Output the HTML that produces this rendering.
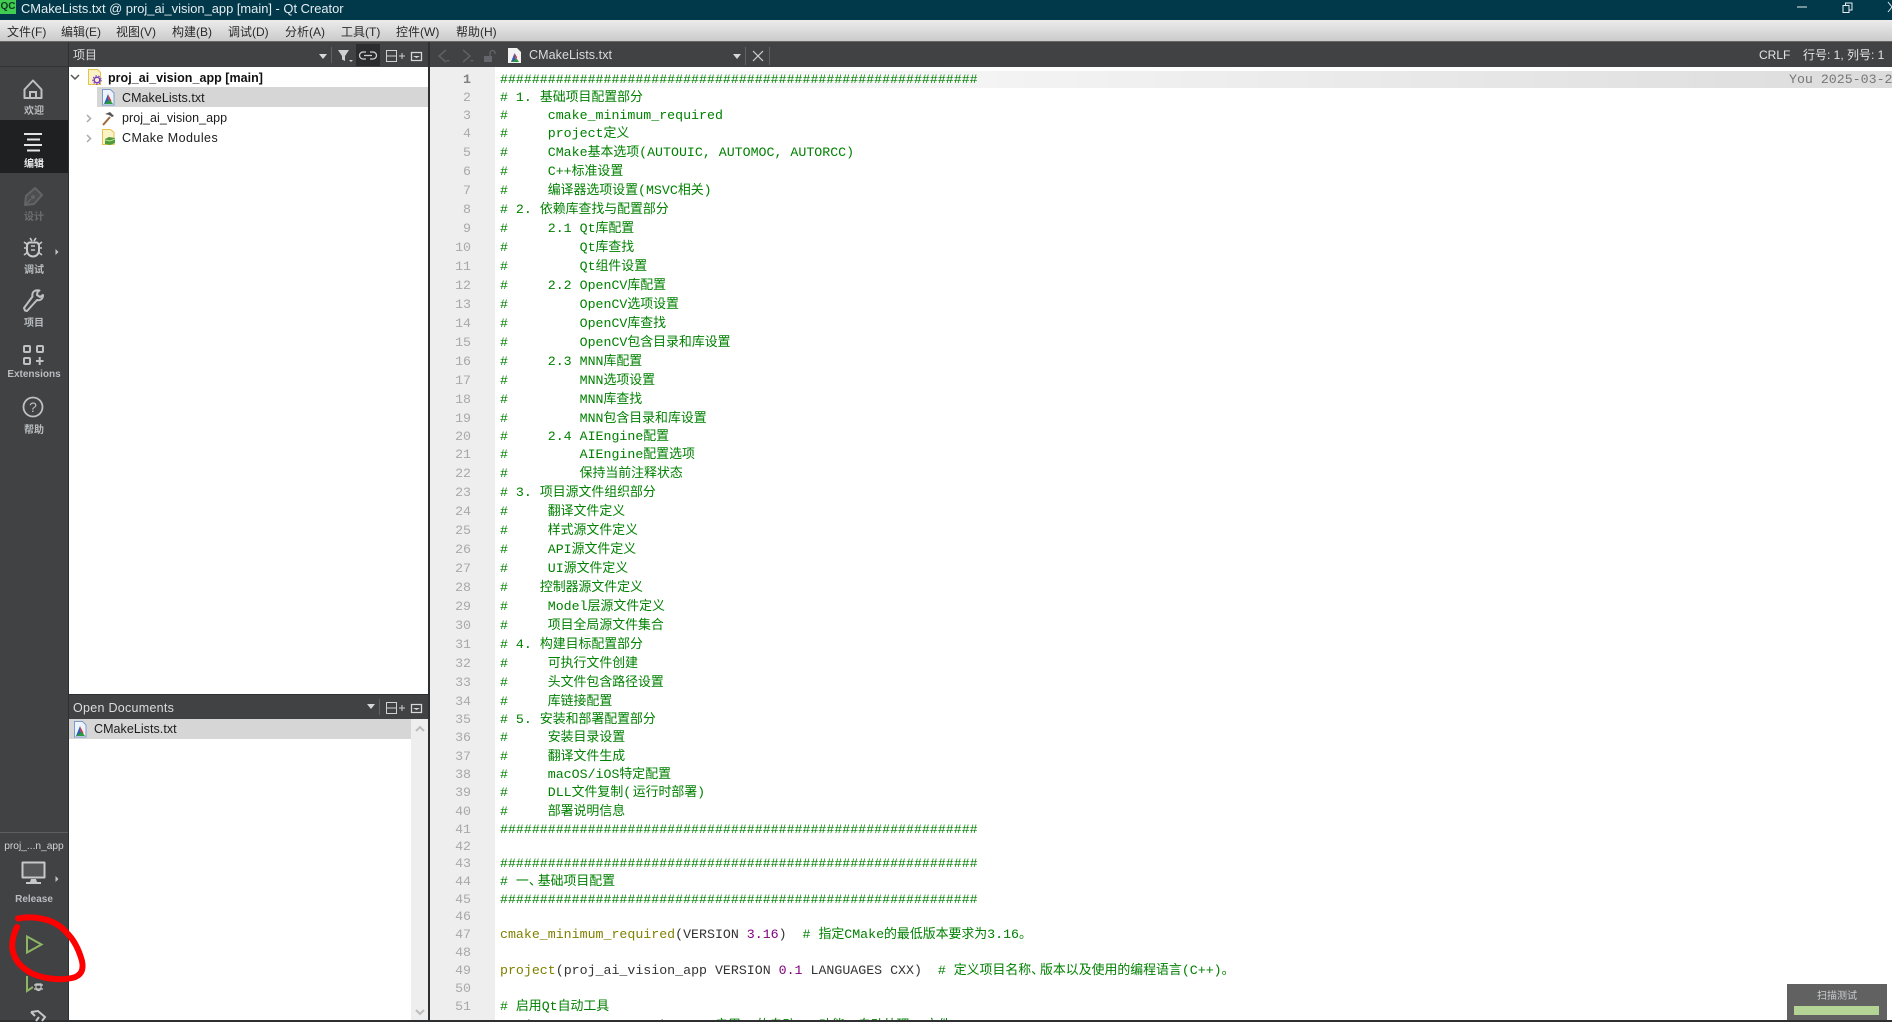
<!DOCTYPE html>
<html><head><meta charset="utf-8"><title>CMakeLists.txt @ proj_ai_vision_app [main] - Qt Creator</title>
<style>
html,body{margin:0;padding:0;width:1892px;height:1022px;overflow:hidden;background:#fff}
body{position:relative;font-family:"Liberation Sans","Noto Sans CJK SC",sans-serif;font-size:12px;color:#222}
.a{position:absolute;white-space:pre}
.bx{position:absolute}
#title{left:0;top:0;width:1892px;height:20px;background:#01394a}
#menu{left:0;top:20px;width:1892px;height:22px;background:linear-gradient(#ececec,#cbcbcb);border-bottom:1px solid #666;box-sizing:border-box}
#tb{left:0;top:42px;width:1892px;height:25px;background:#404244}
#side{left:0;top:66px;width:68px;height:956px;background:#404244;border-top:1px solid #333}
#sl{left:68px;top:42px;width:1px;height:980px;background:#2e2f30}
#div{left:428px;top:42px;width:2px;height:980px;background:#2e2f30}
#gut{left:430px;top:67px;width:65px;height:955px;background:#eeeeee}
#cur{left:495px;top:71px;width:1397px;height:17px;background:linear-gradient(90deg,#fff 0,#f2f2f2 40%,#dcdcdc 100%)}
.m{top:24px;line-height:16px;font-size:12px;color:#2a2a2a}
.sb{width:68px;left:0;text-align:center;font-size:10px;line-height:12px;color:#b9bdc0;font-weight:bold}
.tb{color:#dcdcdc;font-size:12px;line-height:16px}
.tr{font-size:12.5px;line-height:16px;color:#1c1c1c}
#nums,#code{position:absolute;font-family:"Liberation Mono","Noto Sans CJK SC",monospace;font-size:13.28px}
#clip{position:absolute;left:430px;top:67px;width:1462px;height:953px;overflow:hidden}
#nums{left:0;top:4px;width:41px;text-align:right;color:#a9a9a9}
#code{left:70px;top:4px;color:#008000;white-space:normal}
#nums div,#code div{height:19px;line-height:19px;white-space:pre}
#nums div.s,#code div.s{height:17px;line-height:17px}
#nums div.c{color:#808080;font-weight:bold}
#code i{font-style:normal;font-size:12.9px;line-height:10px}
#code b{font-weight:normal;letter-spacing:-4px}
#code u{text-decoration:none;letter-spacing:1.5px}
.o{color:#808000}.k{color:#333}.n{color:#800080}
</style></head><body>
<div class="bx" id="title"></div>
<div class="bx" id="menu"></div>
<div class="bx" id="tb"></div>
<div class="bx" id="side"></div>
<div class="bx" id="sl"></div>
<div class="bx" id="gut"></div>
<div class="bx" id="cur"></div>
<div class="bx" style="left:0;top:120px;width:68px;height:53px;background:#1f2022"></div>
<div class="bx" style="left:0;top:832px;width:68px;height:1px;background:#5c5e60"></div>

<!-- title bar -->
<div class="bx" style="left:0;top:0;width:16px;height:14px;background:#41cd52;color:#0c3b20;font:bold 10px/14px 'Liberation Sans',sans-serif;text-align:center;overflow:hidden">QC</div>
<div class="a" style="left:21px;top:1px;line-height:16px;font-size:12.9px;color:#e6edf0">CMakeLists.txt @ proj_ai_vision_app [main] - Qt Creator</div>

<!-- menu -->
<div class="a m" style="left:7px">文件(F)</div>
<div class="a m" style="left:61px">编辑(E)</div>
<div class="a m" style="left:116px">视图(V)</div>
<div class="a m" style="left:172px">构建(B)</div>
<div class="a m" style="left:228px">调试(D)</div>
<div class="a m" style="left:285px">分析(A)</div>
<div class="a m" style="left:341px">工具(T)</div>
<div class="a m" style="left:396px">控件(W)</div>
<div class="a m" style="left:456px">帮助(H)</div>

<!-- top toolbars text -->
<div class="a tb" style="left:73px;top:47px">项目</div>
<div class="a tb" style="left:529px;top:47px;font-size:12.5px;letter-spacing:.08px">CMakeLists.txt</div>
<div class="a tb" style="left:1759px;top:47px;color:#e4e4e4">CRLF</div>
<div class="a tb" style="left:1803px;top:47px;color:#e4e4e4">行号: 1, 列号: 1</div>

<!-- project tree -->
<div class="bx" style="left:97px;top:87px;width:331px;height:20px;background:#d6d6d6"></div>
<div class="a tr" style="left:108px;top:70px;font-weight:bold;color:#111;letter-spacing:.03px">proj_ai_vision_app [main]</div>
<div class="a tr" style="left:122px;top:90px;letter-spacing:.05px">CMakeLists.txt</div>
<div class="a tr" style="left:122px;top:110px;letter-spacing:.05px">proj_ai_vision_app</div>
<div class="a tr" style="left:122px;top:130px;letter-spacing:.45px">CMake Modules</div>

<!-- open documents -->
<div class="bx" style="left:69px;top:694px;width:359px;height:25px;background:#404244;border-top:1px solid #2e2f30;box-sizing:border-box"></div>
<div class="a tb" style="left:73px;top:700px;font-size:12.5px;letter-spacing:.28px">Open Documents</div>
<div class="bx" style="left:69px;top:719px;width:342px;height:20px;background:#d6d6d6"></div>
<div class="bx" style="left:411px;top:719px;width:17px;height:303px;background:#eeeeee"></div>
<div class="a tr" style="left:94px;top:721px;letter-spacing:.05px">CMakeLists.txt</div>

<!-- sidebar labels -->
<div class="a sb" style="top:106px">欢迎</div>
<div class="a sb" style="top:159px;color:#e6e6e6">编辑</div>
<div class="a sb" style="top:212px;color:#6c6e70">设计</div>
<div class="a sb" style="top:265px">调试</div>
<div class="a sb" style="top:318px">项目</div>
<div class="a sb" style="top:369px">Extensions</div>
<div class="a sb" style="top:425px">帮助</div>
<div class="a sb" style="top:841px;font-weight:normal;font-size:10.2px;color:#d4d4d4">proj_...n_app</div>
<div class="a sb" style="top:894px">Release</div>

<!-- editor -->
<div class="bx" id="div"></div>
<div id="clip">
<div id="nums"><div class="s c">1</div><div>2</div><div class="s">3</div><div>4</div><div>5</div><div>6</div><div>7</div><div>8</div><div>9</div><div>10</div><div>11</div><div>12</div><div>13</div><div>14</div><div>15</div><div>16</div><div>17</div><div>18</div><div>19</div><div class="s">20</div><div>21</div><div>22</div><div>23</div><div>24</div><div>25</div><div>26</div><div>27</div><div>28</div><div>29</div><div>30</div><div>31</div><div>32</div><div>33</div><div>34</div><div class="s">35</div><div>36</div><div>37</div><div class="s">38</div><div>39</div><div>40</div><div class="s">41</div><div class="s">42</div><div class="s">43</div><div>44</div><div class="s">45</div><div class="s">46</div><div>47</div><div class="s">48</div><div>49</div><div class="s">50</div><div>51</div><div>52</div></div>
<div id="code"><div class="s">############################################################</div>
<div># 1. <i>基础项目配置部分</i></div>
<div class="s">#     cmake_minimum_required</div>
<div>#     project<i>定义</i></div>
<div>#     CMake<i>基本选项</i>(AUTOUIC, AUTOMOC, AUTORCC)</div>
<div>#     C++<i>标准设置</i></div>
<div>#     <i>编译器选项设置</i>(MSVC<i>相关</i>)</div>
<div># 2. <i>依赖库查找与配置部分</i></div>
<div>#     2.1 Qt<i>库配置</i></div>
<div>#         Qt<i>库查找</i></div>
<div>#         Qt<i>组件设置</i></div>
<div>#     2.2 OpenCV<i>库配置</i></div>
<div>#         OpenCV<i>选项设置</i></div>
<div>#         OpenCV<i>库查找</i></div>
<div>#         OpenCV<i>包含目录和库设置</i></div>
<div>#     2.3 MNN<i>库配置</i></div>
<div>#         MNN<i>选项设置</i></div>
<div>#         MNN<i>库查找</i></div>
<div>#         MNN<i>包含目录和库设置</i></div>
<div class="s">#     2.4 AIEngine<i>配置</i></div>
<div>#         AIEngine<i>配置选项</i></div>
<div>#         <i>保持当前注释状态</i></div>
<div># 3. <i>项目源文件组织部分</i></div>
<div>#     <i>翻译文件定义</i></div>
<div>#     <i>样式源文件定义</i></div>
<div>#     API<i>源文件定义</i></div>
<div>#     UI<i>源文件定义</i></div>
<div>#    <i>控制器源文件定义</i></div>
<div>#     Model<i>层源文件定义</i></div>
<div>#     <i>项目全局源文件集合</i></div>
<div># 4. <i>构建目标配置部分</i></div>
<div>#     <i>可执行文件创建</i></div>
<div>#     <i>头文件包含路径设置</i></div>
<div>#     <i>库链接配置</i></div>
<div class="s"># 5. <i>安装和部署配置部分</i></div>
<div>#     <i>安装目录设置</i></div>
<div>#     <i>翻译文件生成</i></div>
<div class="s">#     macOS/iOS<i>特定配置</i></div>
<div>#     DLL<i>文件复制</i><u>(</u><i>运行时部署</i><u>)</u></div>
<div>#     <i>部署说明信息</i></div>
<div class="s">############################################################</div>
<div class="s"> </div>
<div class="s">############################################################</div>
<div># <i>一<b>、</b>基础项目配置</i></div>
<div class="s">############################################################</div>
<div class="s"> </div>
<div><span class="o">cmake_minimum_required</span><span class="k">(VERSION </span><span class="n">3.16</span><span class="k">)</span>  # <i>指定</i>CMake<i>的最低版本要求为</i>3.16<i>。</i></div>
<div class="s"> </div>
<div><span class="o">project</span><span class="k">(proj_ai_vision_app VERSION </span><span class="n">0.1</span><span class="k"> LANGUAGES CXX)</span>  # <i>定义项目名称<b>、</b>版本以及使用的编程语言</i>(C++)<i>。</i></div>
<div class="s"> </div>
<div># <i>启用</i>Qt<i>自动工具</i></div>
<div><span class="o">set</span><span class="k">(CMAKE_AUTOUIC ON)</span>    # <i>启用</i>Qt<i>的自动</i>UIC<i>功能，自动处理</i>UI<i>文件</i></div>
</div>
</div>
<div class="a" style="left:1789px;top:72px;line-height:16px;font-family:'Liberation Mono',monospace;font-size:13.28px;color:#777">You 2025-03-2</div>

<!-- scan widget -->
<div class="bx" style="left:1787px;top:984px;width:100px;height:37px;background:#616161"></div>
<div class="a" style="left:1787px;top:990px;width:100px;text-align:center;font-size:10px;line-height:14px;color:#c9cdd0">扫描测试</div>
<div class="bx" style="left:1794px;top:1006px;width:85px;height:9px;background:#b3d495"></div>
<div class="bx" style="left:0;top:1020px;width:1892px;height:2px;background:#2e2f30"></div>

<!-- icons overlay -->
<svg class="bx" style="left:0;top:0" width="1892" height="1022" viewBox="0 0 1892 1022" fill="none">
<!-- window buttons -->
<path d="M1797 7H1807" stroke="#e8eef0" stroke-width="1"/>
<path d="M1843 5.500h6v7h-6zM1845.500 5.500v-2.500h6.500v7h-3" stroke="#e8eef0" stroke-width="1"/>
<path d="M1888 2l4 5-4 5" stroke="#e8eef0" stroke-width="1"/>

<!-- toolbar: project pane -->
<path d="M319 54h8l-4 5z" fill="#d8d8d8"/>
<path d="M331.500 47v16" stroke="#5f6163"/>
<path d="M338 50h11l-4 6v5l-3-1.500v-3.500z" fill="#d0d0d0"/>
<path d="M349 60h4l-2 2z" fill="#d0d0d0"/>
<rect x="356" y="44" width="24" height="22" fill="#2b2c2e"/>
<path d="M366 52h-3a3 3 0 0 0 0 7h3M370 52h3a3 3 0 0 1 0 7h-3M364 55.500h8" stroke="#d0d0d0" stroke-width="1.300"/>
<path d="M386.500 50.500h10v11h-10zM386.500 56h10M399 56h6M402 53v6" stroke="#d0d0d0"/>
<path d="M411.500 52.500h10v8h-10z" stroke="#d8d8d8" stroke-width="1.300"/>
<path d="M413 56h7l-3.500 2z" fill="#d8d8d8"/>
<path d="M428 42h2v25h-2z" fill="#2e2f30"/>

<!-- toolbar: editor -->
<path d="M446 50l-7 6 7 6" stroke="#5f6264" stroke-width="1.500"/><path d="M446 60h4l-2 2z" fill="#5f6264"/>
<path d="M463 50l7 6-7 6" stroke="#5f6264" stroke-width="1.500"/><path d="M470 60h4l-2 2z" fill="#5f6264"/>
<rect x="484" y="56" width="8" height="6" fill="#63666a"/><path d="M490 56v-3a2.500 2.500 0 0 1 5 0v1" stroke="#63666a" stroke-width="1.300"/>
<path d="M508 48h9l4 4v11h-13z" fill="#f2f2f2"/>
<path d="M511 62l3.500-9 1.500 9z" fill="#2f5fb0"/><path d="M514.500 53l2.500 4-1 5z" fill="#d33"/><path d="M511 62h8l-2-3z" fill="#2a9a3a"/>
<path d="M733 54h8l-4 5z" fill="#d8d8d8"/>
<path d="M745.500 47v18M769.500 47v18" stroke="#5f6163"/>
<path d="M753 51l10 10M763 51l-10 10" stroke="#d0d0d0" stroke-width="1.200"/>

<!-- sidebar icons -->
<path d="M24.500 89.500L33 80.500l8.500 9v8.500h-17z" stroke="#c0c0c0" stroke-width="2" stroke-linejoin="round"/>
<path d="M30 98v-6h6v6" stroke="#c0c0c0" stroke-width="2"/>
<path d="M24 134h18M27 139.500h13M24 145h18M27 150.500h13" stroke="#e4e4e4" stroke-width="2"/>
<path d="M25 205l1-9 9-8 7 7-8 9z" stroke="#626466" stroke-width="2" stroke-linejoin="round" fill="#4c4e50"/>
<path d="M25 205l6-6" stroke="#626466" stroke-width="1.500"/>
<circle cx="33" cy="197" r="2" fill="#626466"/>
<path d="M29 242.500h8a4 4 0 0 1 2 3v5a6 6 0 0 1-12 0v-5a4 4 0 0 1 2-3z" stroke="#c8c8c8" stroke-width="2"/>
<path d="M30 238l2 3M36 238l-2 3M24 242l4 3M42 242l-4 3M24 248h4M42 248h-4M24 255l4-3M42 255l-4-3M31 246h4M31 250h4" stroke="#c8c8c8" stroke-width="1.600"/>
<path d="M55.500 249v6l3-3z" fill="#c4c4c4"/>
<path d="M24 308l1 2.500 2 .5 10-11c3 1 6-1 6-5l-3 2-3-2 .500-3 2-1.500c-4-1-8 1-7 6z" stroke="#c0c0c0" stroke-width="2" stroke-linejoin="round"/>
<g stroke="#c0c0c0" stroke-width="2"><rect x="24" y="346" width="6" height="6" rx="1"/><rect x="37" y="346" width="6" height="6" rx="1"/><rect x="24" y="358" width="6" height="6" rx="1"/><path d="M36 361h7.500M39.700 357v8"/></g>
<circle cx="33" cy="407" r="9.500" stroke="#c0c0c0" stroke-width="1.800"/>
<text x="33" y="412" font-family="Liberation Sans" font-size="14" fill="#c0c0c0" text-anchor="middle">?</text>
<path d="M22.500 862.500h22v15h-22z" fill="#555759" stroke="#c8c8c8" stroke-width="2" stroke-linejoin="round"/>
<path d="M31 879h5l1 3h4v2H26v-2h4z" fill="#c8c8c8"/>
<path d="M55.500 876v6l3-3z" fill="#c4c4c4"/>
<path d="M27 936.500l14.500 8-14.500 8z" stroke="#8eb562" stroke-width="2"/>
<path d="M27 976v15l6-4" stroke="#8eb562" stroke-width="2"/>
<path d="M36 984h5v4a2.500 2.500 0 0 1-5 0zM34 985h9M34 989h9" stroke="#c8c8c8" stroke-width="1.200"/>
<path d="M31 1012l7-1 7 6-3 4M31 1012l4 4M36 1021l3-4" stroke="#c8c8c8" stroke-width="2"/>

<!-- red annotation -->
<path d="M17 927C13 935 11 945 13 952c3 10 8 15 18 21 10 5 27 8 41 5 9-2 12-8 10-17-3-11-8-21-15-28-6-7-14-12-24-14-8-2-17-2-25-.500" stroke="#fe0000" stroke-width="6" stroke-linecap="round" stroke-linejoin="round"/>

<!-- tree icons -->
<path d="M71 75l4 4 4-4" stroke="#555" stroke-width="1.500"/>
<path d="M88.500 69.500h9l3 3v12h-12z" fill="#fbf3c8" stroke="#e6c24a"/>
<circle cx="97" cy="80" r="2.800" stroke="#7a3cc0" stroke-width="1.500"/><circle cx="97" cy="80" r="4.200" stroke="#7a3cc0" stroke-dasharray="1.500 1.500"/>
<path d="M102.500 89.500h8l3.500 3.500v12h-11.500z" fill="#eef3fb" stroke="#7a9cc8"/>
<path d="M104 104l4-10 1.500 10z" fill="#2f5fb0"/><path d="M108 94l3.500 7-2 3z" fill="#d33"/><path d="M104 104h9l-3-4z" fill="#2a9a3a"/>
<path d="M87 115l3.500 3.500-3.500 3.500" stroke="#aaa" stroke-width="1.500"/>
<path d="M103 125l7-8" stroke="#a0683a" stroke-width="2"/><path d="M105 114l5-2 4 4-2 1-3-2z" fill="#555"/>
<path d="M87 135l3.500 3.500-3.500 3.500" stroke="#aaa" stroke-width="1.500"/>
<path d="M102.500 129.500h8l3.500 3v12h-11.500z" fill="#fbf3c8" stroke="#e6c24a"/>
<path d="M105 139l4-2 6 1v5l-5 2-5-1z" fill="#4f9a3a"/><path d="M105 140l5 1 5-2" stroke="#b7e08f"/>
<path d="M74.500 721.500h8l3.500 3.500v12h-11.500z" fill="#eef3fb" stroke="#7a9cc8"/>
<path d="M76 736l4-10 1.500 10z" fill="#2f5fb0"/><path d="M80 726l3.500 7-2 3z" fill="#d33"/><path d="M76 736h9l-3-4z" fill="#2a9a3a"/>

<!-- open docs toolbar -->
<path d="M367 704h8l-4 5z" fill="#d8d8d8"/>
<path d="M379.500 699v16" stroke="#5f6163"/>
<path d="M386.500 702.500h10v11h-10zM386.500 708h10M399 708h6M402 705v6" stroke="#d0d0d0"/>
<path d="M411.500 704.500h10v8h-10z" stroke="#d8d8d8" stroke-width="1.300"/>
<path d="M413 708h7l-3.500 2z" fill="#d8d8d8"/>
<path d="M416 731l4-4 4 4" stroke="#bdbdbd" stroke-width="2"/>
<path d="M416 1010l4 4 4-4" stroke="#bdbdbd" stroke-width="2"/>
</svg>
</body></html>
